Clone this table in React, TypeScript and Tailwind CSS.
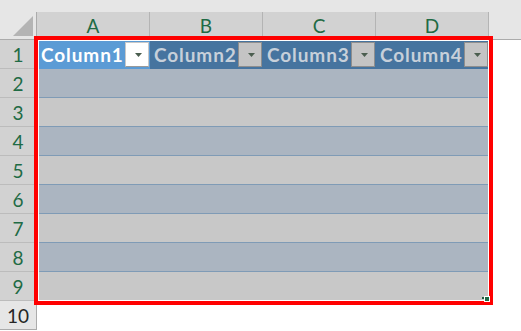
import React from "react";

const cols = ["A", "B", "C", "D"];

function Arrow() {
  return (
    <svg width="7" height="4" viewBox="0 0 7 4" className="ml-[3px] mt-[1px]">
      <polygon points="0,0 7,0 3.5,4" fill="#4b5e4f" />
    </svg>
  );
}

function HeaderCell({ label, active }: { label: string; active: boolean }) {
  return (
    <div
      className={
        "w-[113px] h-[29px] flex items-center justify-between pl-[4px] pr-[1px] " +
        (active ? "bg-[#5b9bd5]" : "bg-[#46749f]")
      }
    >
      <span
        className={
          "text-[19px] font-bold leading-none tracking-[0.9px] " +
          (active ? "text-white" : "text-[#c7d0da]")
        }
      >
        {label}
      </span>
      <div
        className={
          "w-[24px] h-[25px] flex items-center justify-center border " +
          (active
            ? "bg-white border-[#c8c8c8] border-b-[#9a9a9a] border-b-dotted"
            : "bg-[#c4c4c4] border-[#8e8e8e]")
        }
      >
        <Arrow />
      </div>
    </div>
  );
}

export default function App() {
  const rows = [1, 2, 3, 4, 5, 6, 7, 8, 9, 10];
  return (
    <div className="relative w-[521px] h-[331px] bg-white overflow-hidden font-[Lato,sans-serif]">
      <div className="h-[12px] bg-[#e6e6e6]" />
      <div className="flex h-[28px]">
        <div className="relative w-[37px] h-[28px] bg-[#e6e6e6] border-r border-b border-[#ababab]">
          <svg width="36" height="27" className="absolute left-0 top-0">
            <polygon points="13,24 33,24 33,4" fill="#b4b4b4" />
          </svg>
        </div>
        {cols.map((c) => (
          <div
            key={c}
            className="w-[113px] h-[28px] bg-[#d2d2d2] border-r border-b border-r-[#b4b4b4] border-b-[#ababab] flex items-center justify-center text-[19px] text-[#1f6b45] leading-none"
          >
            {c}
          </div>
        ))}
        <div className="flex-1 h-[28px] bg-[#e6e6e6] border-b border-[#ababab]" />
      </div>
      {rows.map((r) => {
        const selected = r <= 9;
        return (
          <div key={r} className="flex h-[29px]">
            <div
              className={
                "w-[37px] h-[29px] border-r border-b flex items-center justify-center text-[19px] leading-none " +
                (selected
                  ? "bg-[#d2d2d2] border-r-[#ababab] border-b-[#bcbcbc] text-[#1f6b45]"
                  : "bg-[#e6e6e6] border-[#ababab] text-[#262626]")
              }
            >
              {r}
            </div>
            {r === 1 ? (
              <div className="flex">
                {["Column1", "Column2", "Column3", "Column4"].map((l, i) => (
                  <HeaderCell key={l} label={l} active={i === 0} />
                ))}
              </div>
            ) : r <= 9 ? (
              <div
                className={
                  "w-[452px] h-[29px] " +
                  (r % 2 === 0
                    ? "bg-[#abb5c1] border-b border-[#7f9bb6]"
                    : r === 9
                    ? "bg-[#c8c8c8] border-b border-white"
                    : "bg-[#c8c8c8] border-b border-[#7f9bb6]")
                }
              />
            ) : (
              <div className="flex-1" />
            )}
          </div>
        );
      })}
      <div className="absolute left-[34px] top-[36px] w-[459px] h-[269px] border-4 border-[#ff0000]">
        <div className="absolute inset-0 border border-white" />
      </div>
      <div className="absolute left-[482px] top-[297px] w-[2px] h-[2px] bg-[#1f5f3f]" />
      <div className="absolute left-[484px] top-[296px] w-[6px] h-[6px] bg-[#1f6b45] border border-white" />
    </div>
  );
}
